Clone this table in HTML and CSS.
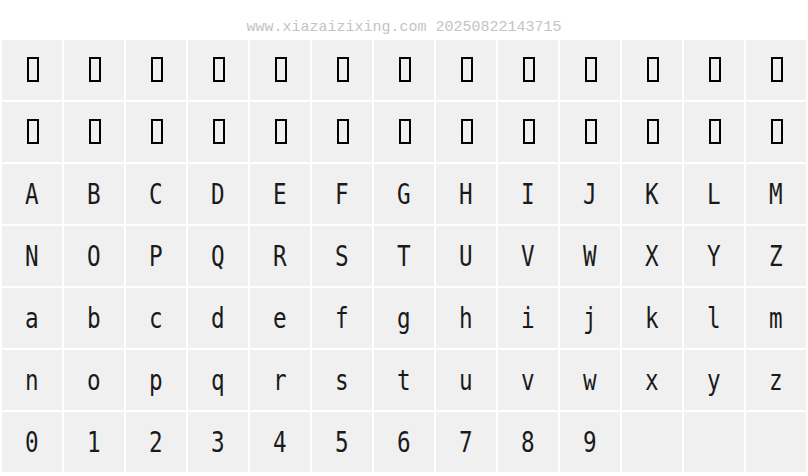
FILE: index.html
```html
<!DOCTYPE html>
<html>
<head>
<meta charset="utf-8">
<link rel="stylesheet" href="styles.css">
</head>
<body>
<div class="header">www.xiazaizixing.com 20250822143715</div>
<div class="grid">
  <div class="cell"><span class="tofu"></span></div><div class="cell"><span class="tofu"></span></div><div class="cell"><span class="tofu"></span></div><div class="cell"><span class="tofu"></span></div><div class="cell"><span class="tofu"></span></div><div class="cell"><span class="tofu"></span></div><div class="cell"><span class="tofu"></span></div><div class="cell"><span class="tofu"></span></div><div class="cell"><span class="tofu"></span></div><div class="cell"><span class="tofu"></span></div><div class="cell"><span class="tofu"></span></div><div class="cell"><span class="tofu"></span></div><div class="cell"><span class="tofu"></span></div>
  <div class="cell"><span class="tofu"></span></div><div class="cell"><span class="tofu"></span></div><div class="cell"><span class="tofu"></span></div><div class="cell"><span class="tofu"></span></div><div class="cell"><span class="tofu"></span></div><div class="cell"><span class="tofu"></span></div><div class="cell"><span class="tofu"></span></div><div class="cell"><span class="tofu"></span></div><div class="cell"><span class="tofu"></span></div><div class="cell"><span class="tofu"></span></div><div class="cell"><span class="tofu"></span></div><div class="cell"><span class="tofu"></span></div><div class="cell"><span class="tofu"></span></div>
  <div class="cell"><span class="ch">A</span></div><div class="cell"><span class="ch">B</span></div><div class="cell"><span class="ch">C</span></div><div class="cell"><span class="ch">D</span></div><div class="cell"><span class="ch">E</span></div><div class="cell"><span class="ch">F</span></div><div class="cell"><span class="ch">G</span></div><div class="cell"><span class="ch">H</span></div><div class="cell"><span class="ch">I</span></div><div class="cell"><span class="ch">J</span></div><div class="cell"><span class="ch">K</span></div><div class="cell"><span class="ch">L</span></div><div class="cell"><span class="ch">M</span></div>
  <div class="cell"><span class="ch">N</span></div><div class="cell"><span class="ch">O</span></div><div class="cell"><span class="ch">P</span></div><div class="cell"><span class="ch">Q</span></div><div class="cell"><span class="ch">R</span></div><div class="cell"><span class="ch">S</span></div><div class="cell"><span class="ch">T</span></div><div class="cell"><span class="ch">U</span></div><div class="cell"><span class="ch">V</span></div><div class="cell"><span class="ch">W</span></div><div class="cell"><span class="ch">X</span></div><div class="cell"><span class="ch">Y</span></div><div class="cell"><span class="ch">Z</span></div>
  <div class="cell"><span class="ch">a</span></div><div class="cell"><span class="ch">b</span></div><div class="cell"><span class="ch">c</span></div><div class="cell"><span class="ch">d</span></div><div class="cell"><span class="ch">e</span></div><div class="cell"><span class="ch">f</span></div><div class="cell"><span class="ch">g</span></div><div class="cell"><span class="ch">h</span></div><div class="cell"><span class="ch">i</span></div><div class="cell"><span class="ch">j</span></div><div class="cell"><span class="ch">k</span></div><div class="cell"><span class="ch">l</span></div><div class="cell"><span class="ch">m</span></div>
  <div class="cell"><span class="ch">n</span></div><div class="cell"><span class="ch">o</span></div><div class="cell"><span class="ch">p</span></div><div class="cell"><span class="ch">q</span></div><div class="cell"><span class="ch">r</span></div><div class="cell"><span class="ch">s</span></div><div class="cell"><span class="ch">t</span></div><div class="cell"><span class="ch">u</span></div><div class="cell"><span class="ch">v</span></div><div class="cell"><span class="ch">w</span></div><div class="cell"><span class="ch">x</span></div><div class="cell"><span class="ch">y</span></div><div class="cell"><span class="ch">z</span></div>
  <div class="cell"><span class="ch">0</span></div><div class="cell"><span class="ch">1</span></div><div class="cell"><span class="ch">2</span></div><div class="cell"><span class="ch">3</span></div><div class="cell"><span class="ch">4</span></div><div class="cell"><span class="ch">5</span></div><div class="cell"><span class="ch">6</span></div><div class="cell"><span class="ch">7</span></div><div class="cell"><span class="ch">8</span></div><div class="cell"><span class="ch">9</span></div><div class="cell"></div><div class="cell"></div><div class="cell"></div>
</div>
</body>
</html>
```

FILE: styles.css
```css
html, body {
  margin: 0;
  padding: 0;
  background: #ffffff;
}

.header {
  height: 40px;
  box-sizing: border-box;
  padding-top: 19px;
  text-align: center;
  font-family: "Liberation Mono", monospace;
  font-size: 15px;
  line-height: 18px;
  color: #c4c4c4;
}

.grid {
  display: grid;
  grid-template-columns: repeat(13, 60px);
  grid-auto-rows: 60px;
  gap: 2px;
  padding-left: 2px;
}

.cell {
  background: #f0f0f0;
  display: flex;
  align-items: center;
  justify-content: center;
  color: #1a1a1a;
}

.ch {
  display: block;
  font-family: "DejaVu Sans Mono", monospace;
  font-size: 29px;
  line-height: 1;
  transform: scaleX(0.78);
}

.tofu {
  display: block;
  width: 12px;
  height: 25px;
  box-sizing: border-box;
  border: 2px solid #000000;
  margin-left: 2px;
  margin-top: -2px;
}
```
